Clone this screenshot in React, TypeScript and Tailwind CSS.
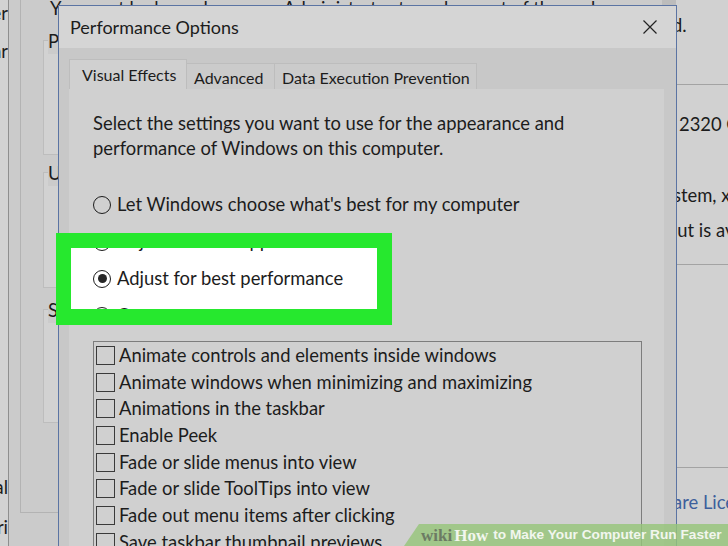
import { ReactNode } from 'react'

const EFFECTS = [
  'Animate controls and elements inside windows',
  'Animate windows when minimizing and maximizing',
  'Animations in the taskbar',
  'Enable Peek',
  'Fade or slide menus into view',
  'Fade or slide ToolTips into view',
  'Fade out menu items after clicking',
  'Save taskbar thumbnail previews',
  'Show shadows under mouse pointer',
]

const RADIOS = [
  { label: "Let Windows choose what's best for my computer" },
  { label: 'Adjust for best appearance' },
  { label: 'Adjust for best performance', checked: true },
  { label: 'Custom:' },
]

function Radio({ label, checked }: { label: string; checked?: boolean }) {
  return (
    <div className="relative flex h-[37px] items-center gap-[6px]">
      <span className="flex h-[18px] w-[18px] shrink-0 items-center justify-center rounded-full border-[1.5px] border-[#1d1d1d]">
        {checked && <span className="h-[9px] w-[9px] rounded-full bg-[#262626]" />}
      </span>
      <span className="whitespace-nowrap">{label}</span>
    </div>
  )
}

function Check({ label }: { label: string }) {
  return (
    <div className="flex h-[26.7px] items-center gap-[4px]">
      <span className="h-[19px] w-[19px] shrink-0 border-[1.5px] border-[#3a3a3a]" />
      <span className="whitespace-nowrap">{label}</span>
    </div>
  )
}

function GroupBox({ label, className, children }: { label: string; className: string; children?: ReactNode }) {
  return (
    <div className={`border border-[#bdbdbd] bg-[#d2d2d2] ${className}`}>
      <div className="-mt-[12px] ml-[4px] w-fit whitespace-nowrap bg-[#cbcbcb] leading-[25px]">{label}</div>
      {children}
    </div>
  )
}

export default function App() {
  return (
    <div className="relative flex h-[546px] w-[728px] overflow-hidden bg-[#cdcdcd] font-['Lato',sans-serif] text-[18.4px] text-[#1c1c1c]">
      {/* window further left, mostly off screen */}
      <div className="flex w-[8px] shrink-0 flex-col items-end overflow-hidden bg-[#d2d2d2] pt-[1px] leading-[25px]">
        <div className="whitespace-nowrap">Computer</div>
        <div className="mt-[13px] whitespace-nowrap">Similar</div>
        <div className="mt-[411px] whitespace-nowrap">General</div>
        <div className="mt-[15px] whitespace-nowrap">Descri</div>
      </div>
      <div className="w-px shrink-0 bg-[#8e8e8e]" />

      {/* System Properties, behind the dialog */}
      <div className="w-[653px] shrink-0 overflow-hidden bg-[#cbcbcb] pl-[11px]">
        <div className="h-[517px] border-b border-l border-[#b3b3b3] pl-[22px]">
          <div className="-mt-[4px] h-[25px] whitespace-nowrap pl-[7px] leading-[25px]">
            You must be logged on as an Administrator to make most of these changes.
          </div>
          <GroupBox label="Performance" className="mt-[19px] h-[115px]" />
          <GroupBox label="User Profiles" className="mt-[17px] h-[116px]" />
          <GroupBox label="Startup and Recovery" className="mt-[21px] h-[114px]" />
        </div>
      </div>
      <div className="w-[14px] shrink-0 bg-[#bcbcbc]" />

      {/* System window on the right */}
      <div className="flex w-[52px] shrink-0 flex-col bg-[#d1d1d1] leading-[25px]">
        <div className="-ml-[4px] mt-[13px] whitespace-nowrap">d.</div>
        <div className="mt-[46px] h-px bg-[#a3a3a3]" />
        <div className="ml-[3px] mt-[27px] whitespace-nowrap">2320 CPU</div>
        <div className="-ml-[3px] mt-[46px] whitespace-nowrap">stem, x64-based</div>
        <div className="-ml-[9px] mt-[10px] whitespace-nowrap">put is available</div>
        <div className="mt-[21px] h-px bg-[#a3a3a3]" />
        <div className="mt-[202px] h-px bg-[#a3a3a3]" />
        <div className="-ml-[3px] mt-[22px] whitespace-nowrap text-[#3d5f9c]">are License Terms</div>
      </div>

      {/* Performance Options dialog */}
      <div className="absolute left-[58px] top-[5px] z-10 flex h-[560px] w-[619px] flex-col border border-[#5b74a3] bg-[#c8c8c8]">
        <div className="flex h-[42px] shrink-0 items-center justify-between bg-[#d5d5d5] pl-[11px] pr-[19px]">
          <span className="text-[18px]">Performance Options</span>
          <svg width="14" height="14" viewBox="0 0 14 14">
            <path d="M0.5 0.5L13.5 13.5M13.5 0.5L0.5 13.5" stroke="#222" strokeWidth="1.2" />
          </svg>
        </div>
        <div className="flex flex-1 flex-col pl-[10px] pr-[12px] pt-[11px]">
          <div className="flex h-[30px] items-end text-[16px]">
            <div className="flex h-[30px] w-[118px] items-center border border-b-0 border-[#bdbdbd] bg-[#d0d0d0] pl-[12px] pt-[1px]">
              Visual Effects
            </div>
            <div className="flex h-[26px] w-[88px] items-center border-r border-t border-[#bdbdbd] bg-[#cbcbcb] pl-[7px] pt-[2px]">
              Advanced
            </div>
            <div className="flex h-[26px] w-[202px] items-center border-r border-t border-[#bdbdbd] bg-[#cbcbcb] pl-[7px] pt-[2px]">
              Data Execution Prevention
            </div>
          </div>
          <div className="flex-1 bg-[#d0d0d0] pl-[24px] pt-[22px]">
            <p className="leading-[25px]">
              Select the settings you want to use for the appearance and
              <br />
              performance of Windows on this computer.
            </p>
            <div className="relative mt-[25px] leading-[25px]">
              <div className="absolute -left-[22px] top-[62px] h-[61px] w-[306px] bg-white" />
              {RADIOS.map((r) => (
                <Radio key={r.label} label={r.label} checked={r.checked} />
              ))}
            </div>
            <div className="mt-[7px] w-[549px] border border-[#7d7d7d] pl-[2px] leading-[25px]">
              {EFFECTS.map((e) => (
                <Check key={e} label={e} />
              ))}
            </div>
          </div>
        </div>
      </div>

      {/* highlight */}
      <div className="absolute left-[56px] top-[233px] z-20 h-[92px] w-[336px] border-[15px] border-b-[16px] border-[#26e82e]" />

      {/* watermark */}
      <div className="absolute bottom-0 right-0 z-30 flex h-[22px] w-[324px] items-center bg-[rgba(150,196,122,0.82)] pl-[17px] [clip-path:polygon(15px_0,100%_0,100%_100%,0_100%)]">
        <span className="font-['Liberation_Serif',serif] text-[17px] font-bold leading-none text-[#6c7b64]">wiki</span>
        <span className="ml-[2px] font-['Liberation_Serif',serif] text-[17px] font-bold leading-none text-[#f2f6ee]">How</span>
        <span className="ml-[5px] font-['Liberation_Sans',sans-serif] text-[13.7px] font-bold leading-none text-[#f2f6ee]">
          to Make Your Computer Run Faster
        </span>
      </div>
    </div>
  )
}
